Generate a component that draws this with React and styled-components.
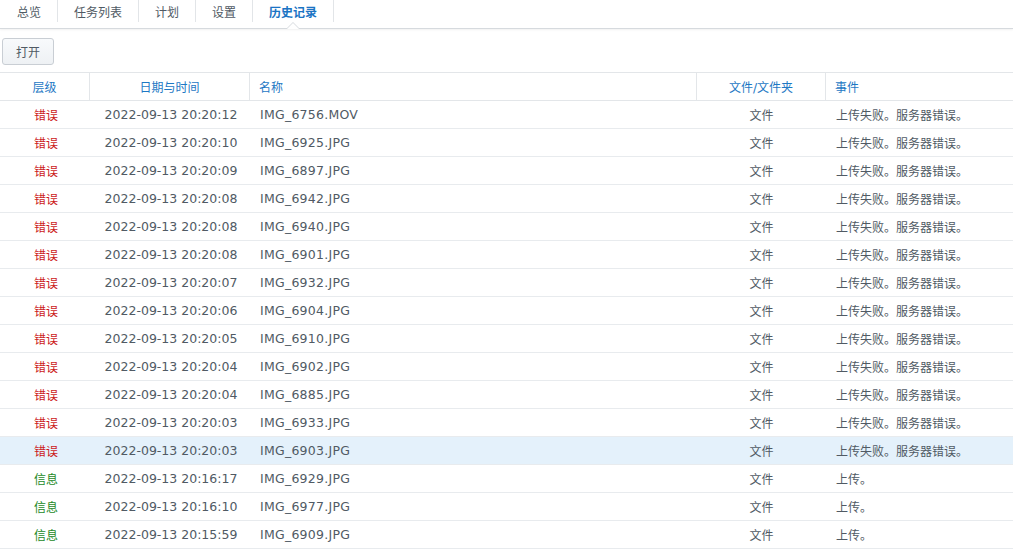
import React from "react";
import styled, { createGlobalStyle } from "styled-components";

const GlobalStyle = createGlobalStyle`
	body {
		margin: 0;
		background: #fff;
		font-family: "DejaVu Sans", "Noto Sans CJK SC", sans-serif;
		font-size: 12px;
		color: #505a64;
	}
`;

const StyledTabBar = styled.nav`
	display: flex;
	height: 28px;
	border-bottom: 1px solid #d6dade;
	box-shadow: 0 1px 2px rgba(0, 0, 0, 0.06);
	background: #fff;
`;

const StyledTab = styled.div`
	position: relative;
	display: flex;
	align-items: center;
	height: 22px;
	padding: 0 16px;
	border-right: 1px solid #e2e5e8;
	color: ${(p) => (p.$active ? "#1b74c4" : "#505a64")};
	font-weight: ${(p) => (p.$active ? "bold" : "normal")};
	white-space: nowrap;

	&:first-child {
		padding-left: 17px;
	}

	${(p) =>
		p.$active &&
		`
		&::before, &::after {
			content: "";
			position: absolute;
			left: 50%;
			width: 0;
			height: 0;
			border-style: solid;
		}
		&::before {
			bottom: -7px;
			margin-left: -7px;
			border-width: 0 7px 7px 7px;
			border-color: transparent transparent #d6dade transparent;
		}
		&::after {
			bottom: -7px;
			margin-left: -6px;
			border-width: 0 6px 6px 6px;
			border-color: transparent transparent #fff transparent;
			z-index: 2;
		}
	`}
`;

const StyledToolbar = styled.div`
	display: flex;
	align-items: center;
	height: 43px;
	padding: 0 2px;
`;

const StyledButton = styled.button`
	height: 27px;
	width: 52px;
	margin-top: 1px;
	border: 1px solid #c9ced4;
	border-radius: 3px;
	background: linear-gradient(#f8fafc, #eef1f4);
	color: #505a64;
	font-family: inherit;
	font-size: 12px;
	cursor: pointer;
`;

const COLUMNS = "90px 160px 447px 129px 1fr";

const StyledTable = styled.div`
	border-top: 1px solid #e3e6e9;
`;

const StyledHeadRow = styled.div`
	display: grid;
	grid-template-columns: ${COLUMNS};
	height: 27px;
	border-bottom: 1px solid #e3e6e9;
	color: #1e78c4;
`;

const StyledHeadCell = styled.div`
	display: flex;
	align-items: center;
	justify-content: ${(p) => (p.$left ? "flex-start" : "center")};
	padding: ${(p) => (p.$left ? "0 9px" : "0")};
	border-right: ${(p) => (p.$last ? "none" : "1px solid #e3e6e9")};
`;

const StyledRow = styled.div`
	display: grid;
	grid-template-columns: ${COLUMNS};
	height: 27px;
	border-bottom: 1px solid #e8ebee;
	background: ${(p) => (p.$selected ? "#e4f1fb" : "transparent")};
`;

const StyledCell = styled.div`
	display: flex;
	align-items: center;
	justify-content: ${(p) => (p.$left ? "flex-start" : "center")};
	padding: ${(p) => (p.$left ? "0 10px" : "0")};
	white-space: nowrap;
	overflow: hidden;
`;

const StyledTime = styled(StyledCell)`
	font-size: 12.5px;
	padding-left: 2px;
`;

const StyledName = styled(StyledCell)`
	font-size: 12.5px;
	letter-spacing: 0.25px;
`;

const StyledLevel = styled(StyledCell)`
	color: ${(p) => (p.$error ? "#cc1a1a" : "#258a28")};
	padding-left: 2px;
`;

const tabs = ["总览", "任务列表", "计划", "设置", "历史记录"];

const FAIL = "上传失败。服务器错误。";
const OK = "上传。";

const rows = [
	["错误", "2022-09-13 20:20:12", "IMG_6756.MOV", FAIL],
	["错误", "2022-09-13 20:20:10", "IMG_6925.JPG", FAIL],
	["错误", "2022-09-13 20:20:09", "IMG_6897.JPG", FAIL],
	["错误", "2022-09-13 20:20:08", "IMG_6942.JPG", FAIL],
	["错误", "2022-09-13 20:20:08", "IMG_6940.JPG", FAIL],
	["错误", "2022-09-13 20:20:08", "IMG_6901.JPG", FAIL],
	["错误", "2022-09-13 20:20:07", "IMG_6932.JPG", FAIL],
	["错误", "2022-09-13 20:20:06", "IMG_6904.JPG", FAIL],
	["错误", "2022-09-13 20:20:05", "IMG_6910.JPG", FAIL],
	["错误", "2022-09-13 20:20:04", "IMG_6902.JPG", FAIL],
	["错误", "2022-09-13 20:20:04", "IMG_6885.JPG", FAIL],
	["错误", "2022-09-13 20:20:03", "IMG_6933.JPG", FAIL],
	["错误", "2022-09-13 20:20:03", "IMG_6903.JPG", FAIL],
	["信息", "2022-09-13 20:16:17", "IMG_6929.JPG", OK],
	["信息", "2022-09-13 20:16:10", "IMG_6977.JPG", OK],
	["信息", "2022-09-13 20:15:59", "IMG_6909.JPG", OK],
];

const App = () => {
	return (
		<>
			<GlobalStyle />
			<StyledTabBar>
				{tabs.map((t, i) => (
					<StyledTab key={t} $active={i === tabs.length - 1}>
						{t}
					</StyledTab>
				))}
			</StyledTabBar>

			<StyledToolbar>
				<StyledButton>打开</StyledButton>
			</StyledToolbar>

			<StyledTable>
				<StyledHeadRow>
					<StyledHeadCell>层级</StyledHeadCell>
					<StyledHeadCell>日期与时间</StyledHeadCell>
					<StyledHeadCell $left>名称</StyledHeadCell>
					<StyledHeadCell>文件/文件夹</StyledHeadCell>
					<StyledHeadCell $left $last>
						事件
					</StyledHeadCell>
				</StyledHeadRow>

				{rows.map(([level, time, name, event], i) => (
					<StyledRow key={name} $selected={i === 12}>
						<StyledLevel $error={level === "错误"}>{level}</StyledLevel>
						<StyledTime>{time}</StyledTime>
						<StyledName $left>{name}</StyledName>
						<StyledCell>文件</StyledCell>
						<StyledCell $left>{event}</StyledCell>
					</StyledRow>
				))}
			</StyledTable>
		</>
	);
};

export default App;
